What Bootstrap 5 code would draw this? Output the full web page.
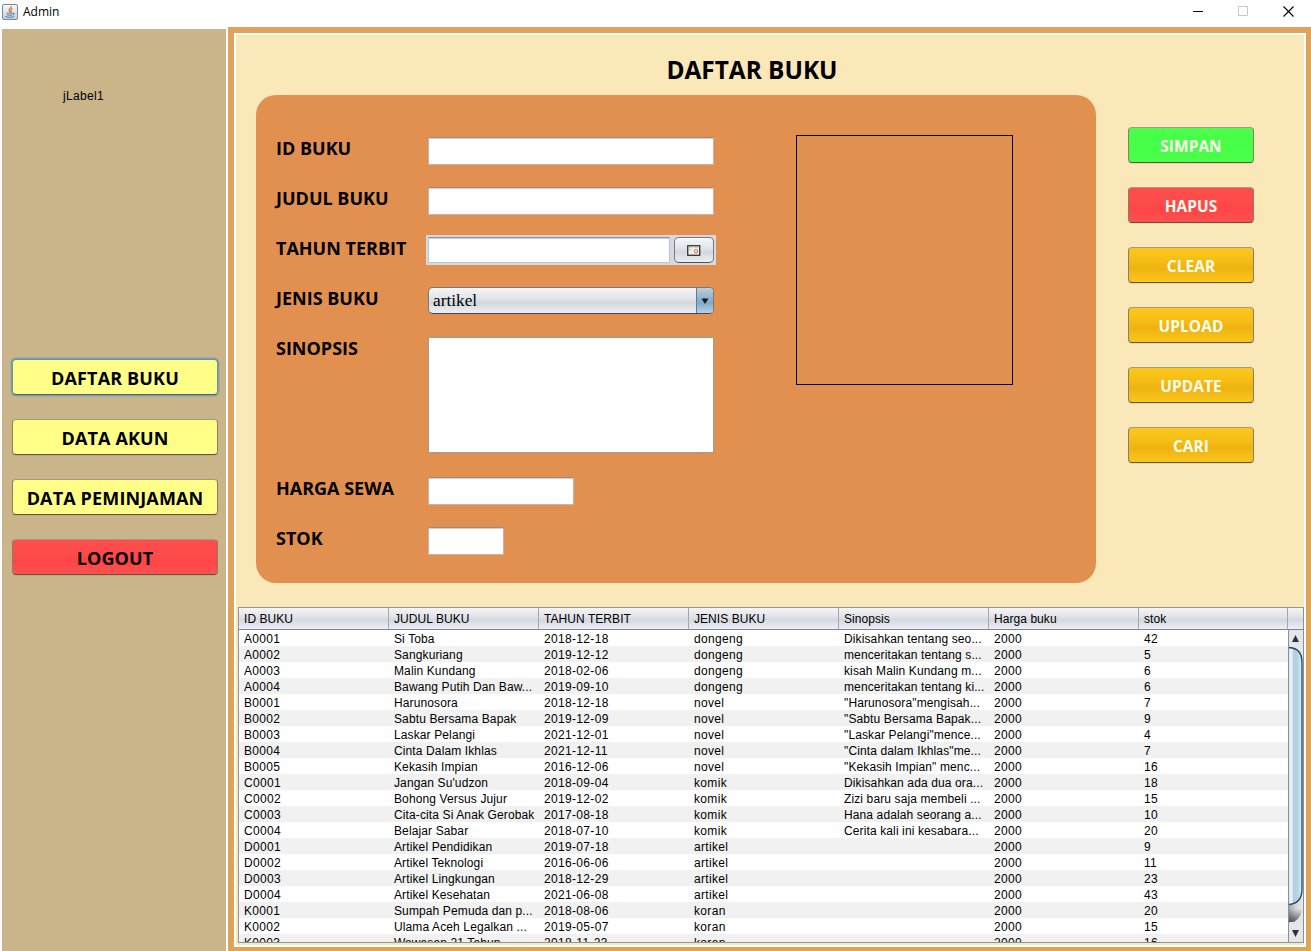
<!DOCTYPE html>
<html lang="id">
<head>
<meta charset="utf-8">
<meta name="viewport" content="width=device-width, initial-scale=1">
<title>Admin</title>
<link href="https://cdn.jsdelivr.net/npm/bootstrap@5.3.0/dist/css/bootstrap.min.css" rel="stylesheet">
<style>
  body { height: 951px; background: #fff; color: #000; font: 12px/16px "Liberation Sans", sans-serif; }
  .titlebar { height: 27px; padding: 0 17px 4px 2px; }
  .app-name { font: 12px/16px "Open Sans", sans-serif; margin: 1px 0 0 5px; }
  .win-icons { gap: 34px; }

  .side-panel { width: 224px; margin: 2px 2px 0 2px; padding: 59px 8px 0 10px; background: #cab48a; }
  .user-label { margin-left: 51px; height: 271px; letter-spacing: .32px; }
  .nim { font: 700 18px/20px "Open Sans", sans-serif; border-radius: 4px; padding: 0; color: #000; white-space: nowrap;
         border: 1px solid #857f63; border-top-color: #a39b80; border-bottom-color: #5b5740; height: 36px; box-shadow: 0 1px 0 rgba(90,90,90,.12); }
  .side-panel .nim { padding-top: 1px; letter-spacing: .14px; }
  .nim-yellow { background: #ffff88; }
  .nim-focus { border-color: #6f8f9a; border-bottom-color: #48626f; box-shadow: 0 0 0 1.4px #7f9fb2; }
  .nim-red { background: linear-gradient(#ff4e4c, #ff4b4b 40%, #ff4545 60%, #ff5050); }
  .nim-green { background: linear-gradient(#4bff4b, #45ff45 60%, #4cff4c); }
  .nim-gold { background: linear-gradient(#fcc81e, #f4bd15 40%, #efb210 58%, #fac61c); }
  .actions { width: 126px; gap: 24px; margin: 32px 0 0 32px; }
  .actions .nim { font-size: 15.4px; color: #fffdf0; padding-top: 3px; letter-spacing: .1px; }

  .frame-outer { background: #dfa45c; padding: 6px 5px 4px 6px; }
  .frame-inner { border: 2px solid #fff; background: #fae8b8; padding: 0 0 2px 2px; }
  .page-title { font: 700 24.4px/28px "Open Sans", sans-serif; margin: 21px 0 0 26px; width: 976px; height: 39px; }

  .form-panel { width: 840px; height: 488px; margin-left: 18px; border-radius: 20px; background: #e1904f; padding: 28px 83px 0 20px; }
  .form-grid { display: grid; grid-template-columns: 150px 290px; grid-template-rows: repeat(4, 50px) 140px 50px 50px; }
  .form-grid label { font: 700 18px/20px "Open Sans", sans-serif; padding-top: 15px; white-space: nowrap; }
  .field { background: #fff; border: 1px solid #c3b5a8; border-top: 1px solid #a08b7a; box-shadow: inset 0 1px 1px #c9ccd4; border-radius: 0;
           height: 28px; margin: 14px 0 0 2px; padding: 0; width: 286px; display: block; outline: 0; }
  .field-price { width: 146px; }
  .field-stock { width: 76px; }
  .date-box { background: #d6d9df; width: 290px; height: 30px; margin-top: 12px; padding: 2px; }
  .date-box .field { margin: 0; width: 242px; height: 26px; border-color: #c0c4cc; border-top-color: #8d919b; }
  .cal-btn { width: 40px; height: 26px; margin-left: 4px; border: 1px solid #737a87; border-bottom-color: #4b5260; border-radius: 5px;
             background: linear-gradient(#f7f8fa, #dfe2e7 45%, #d4d7dd 60%, #eceff4); padding: 0; }
  .kind { width: 286px; height: 27px; margin: 14px 0 0 2px; border: 1px solid #737a87; border-bottom-color: #3f4856; border-radius: 5px; overflow: hidden;
          background: linear-gradient(#f5f6f8, #dfe2e7 45%, #d4d7dd 60%, #eceff4); font: 17.3px/25px "Liberation Serif", serif; padding-left: 4px; }
  .kind-arrow { width: 17px; border-left: 1px solid #5d7c95; background: linear-gradient(#b9cede, #8fb0c8 45%, #86a9c3 60%, #b6d3e8); }
  textarea.field { border: 1px solid #a59a90; box-shadow: none; height: 116px; resize: none; }
  .cover { width: 217px; height: 250px; margin-top: 12px; border: 1px solid #000; }

  .grid-box { width: 1066px; margin-top: 24px; height: 336px; border: 1px solid #92959c; border-right-color: #8a8f99; overflow: hidden; background: #fff; }
  .book-table { table-layout: fixed; width: 1049px; margin: 0; letter-spacing: .12px; border-collapse: separate; border-spacing: 0; }
  .book-table col { width: 150px; }
  .book-table col:last-child { width: 149px; }
  .book-table th, .book-table td { padding: 0 5px; height: 16px; line-height: 16px; white-space: nowrap; overflow: hidden; font-weight: 400; text-align: left; }
  .book-table td { padding: 2px 5px 0; line-height: 14px; }
  .book-table td:nth-child(2), .book-table td:nth-child(5) { padding-right: 0; }
  .book-table th { height: 22px; line-height: 20px; border-right: 1px solid #a1a6b0; border-bottom: 1px solid #7e838e; letter-spacing: .06px; }
  .book-table th, .corner { background: linear-gradient(#f4f5f7, #dfe1e7 45%, #d5d8de 55%, #e6e9f2 90%, #eef0f8); }
  .book-table tbody tr:nth-child(even) { background: #f1f1f1; }
  .book-table td:nth-child(1), .book-table td:nth-child(3), .book-table td:nth-child(4), .book-table td:nth-child(6), .book-table td:nth-child(7) { letter-spacing: .33px; }
  .corner { height: 22px; border-bottom: 1px solid #7e838e; }
</style>
</head>
<body class="d-flex flex-column overflow-hidden">

<header class="titlebar d-flex align-items-center flex-shrink-0">
  <svg width="16" height="16" viewBox="0 0 16 16" fill="none">
    <defs><linearGradient id="jv" x2="0" y2="1"><stop stop-color="#fafbfc"/><stop offset="1" stop-color="#c3d0dd"/></linearGradient></defs>
    <rect x=".5" y=".5" width="15" height="15" rx="1.5" fill="url(#jv)" stroke="#7288a0"/>
    <path d="M9.300 2c.6 1.700-3 2.500-2.300 4.100.3.7 1.100 1.200 1 2.100M10.500 4.400c-1.800.7-2.200 1.500-1.500 2.400.4.600.3 1.200-.4 1.700" stroke="#e2702c" stroke-width="1.200"/>
    <path d="M4.500 9.200h6.200M5 10.900c1.500.5 3.700.5 5.300 0M10.900 9.200c2-.5 2.200 1.200.2 1.800M3.200 12.300c1.300 1.300 7.500 1.300 9 .2" stroke="#4a6f94" stroke-width=".9"/>
  </svg>
  <span class="app-name">Admin</span>
  <div class="win-icons d-flex align-items-center ms-auto">
    <svg width="11" height="11" viewBox="0 0 11 11"><path d="M0 5.500h10" stroke="#000"/></svg>
    <svg width="11" height="11" viewBox="0 0 11 11"><path d="M.5.500h9v9h-9z" fill="none" stroke="#c8c8c8"/></svg>
    <svg width="11" height="11" viewBox="0 0 11 11"><path d="M.5.500l10 10M10.500.500l-10 10" stroke="#000" stroke-width="1.100"/></svg>
  </div>
</header>

<div class="d-flex flex-grow-1">
  <nav class="side-panel flex-shrink-0">
    <div class="user-label">jLabel1</div>
    <div class="d-grid gap-4">
      <button class="btn nim nim-yellow nim-focus">DAFTAR BUKU</button>
      <button class="btn nim nim-yellow">DATA AKUN</button>
      <button class="btn nim nim-yellow">DATA PEMINJAMAN</button>
      <button class="btn nim nim-red">LOGOUT</button>
    </div>
  </nav>

  <div class="frame-outer d-flex flex-grow-1">
    <main class="frame-inner flex-grow-1">
      <h1 class="page-title text-center">DAFTAR BUKU</h1>
      <div class="d-flex">
        <form class="form-panel d-flex justify-content-between">
          <div class="form-grid">
            <label for="id">ID BUKU</label><input id="id" class="field">
            <label for="judul">JUDUL BUKU</label><input id="judul" class="field">
            <label for="tahun">TAHUN TERBIT</label>
            <div class="date-box d-flex"><input id="tahun" class="field">
              <button type="button" class="cal-btn d-flex align-items-center justify-content-center" aria-label="Kalender">
                <svg width="14" height="11" viewBox="0 0 14 11"><rect x=".75" y=".75" width="12" height="9.500" fill="#f3f0e6" stroke="#222" stroke-width="1.200"/><path d="M2 2.500h3M2 4.500h3M7 2.500h4" stroke="#c9d3bb"/><circle cx="9" cy="6.300" r="1.700" fill="#fff" stroke="#d44b52" stroke-width=".9"/></svg>
              </button>
            </div>
            <label>JENIS BUKU</label>
            <div class="kind d-flex justify-content-between"><span>artikel</span>
              <span class="kind-arrow d-flex align-items-center justify-content-center"><svg width="8" height="6" viewBox="0 0 8 6"><path d="M.5.500h7L4 6z" fill="#0d1b26"/></svg></span>
            </div>
            <label for="sinopsis">SINOPSIS</label><textarea id="sinopsis" class="field"></textarea>
            <label for="harga">HARGA SEWA</label><input id="harga" class="field field-price">
            <label for="stok">STOK</label><input id="stok" class="field field-stock">
          </div>
          <div class="cover"></div>
        </form>
        <div class="actions d-flex flex-column">
          <button class="btn nim nim-green">SIMPAN</button>
          <button class="btn nim nim-red">HAPUS</button>
          <button class="btn nim nim-gold">CLEAR</button>
          <button class="btn nim nim-gold">UPLOAD</button>
          <button class="btn nim nim-gold">UPDATE</button>
          <button class="btn nim nim-gold">CARI</button>
        </div>
      </div>

      <section class="grid-box d-flex">
        <div class="flex-shrink-0">
        <table class="book-table">
          <colgroup><col><col><col><col><col><col><col></colgroup>
          <thead><tr><th>ID BUKU</th><th>JUDUL BUKU</th><th>TAHUN TERBIT</th><th>JENIS BUKU</th><th>Sinopsis</th><th>Harga buku</th><th>stok</th></tr></thead>
          <tbody>
            <tr><td>A0001</td><td>Si Toba</td><td>2018-12-18</td><td>dongeng</td><td>Dikisahkan tentang seo...</td><td>2000</td><td>42</td></tr>
            <tr><td>A0002</td><td>Sangkuriang</td><td>2019-12-12</td><td>dongeng</td><td>menceritakan tentang s...</td><td>2000</td><td>5</td></tr>
            <tr><td>A0003</td><td>Malin Kundang</td><td>2018-02-06</td><td>dongeng</td><td>kisah Malin Kundang m...</td><td>2000</td><td>6</td></tr>
            <tr><td>A0004</td><td>Bawang Putih Dan Baw...</td><td>2019-09-10</td><td>dongeng</td><td>menceritakan tentang ki...</td><td>2000</td><td>6</td></tr>
            <tr><td>B0001</td><td>Harunosora</td><td>2018-12-18</td><td>novel</td><td>"Harunosora"mengisah...</td><td>2000</td><td>7</td></tr>
            <tr><td>B0002</td><td>Sabtu Bersama Bapak</td><td>2019-12-09</td><td>novel</td><td>"Sabtu Bersama Bapak...</td><td>2000</td><td>9</td></tr>
            <tr><td>B0003</td><td>Laskar Pelangi</td><td>2021-12-01</td><td>novel</td><td>"Laskar Pelangi"mence...</td><td>2000</td><td>4</td></tr>
            <tr><td>B0004</td><td>Cinta Dalam Ikhlas</td><td>2021-12-11</td><td>novel</td><td>"Cinta dalam Ikhlas"me...</td><td>2000</td><td>7</td></tr>
            <tr><td>B0005</td><td>Kekasih Impian</td><td>2016-12-06</td><td>novel</td><td>"Kekasih Impian" menc...</td><td>2000</td><td>16</td></tr>
            <tr><td>C0001</td><td>Jangan Su'udzon</td><td>2018-09-04</td><td>komik</td><td>Dikisahkan ada dua ora...</td><td>2000</td><td>18</td></tr>
            <tr><td>C0002</td><td>Bohong Versus Jujur</td><td>2019-12-02</td><td>komik</td><td>Zizi baru saja membeli ...</td><td>2000</td><td>15</td></tr>
            <tr><td>C0003</td><td>Cita-cita Si Anak Gerobak</td><td>2017-08-18</td><td>komik</td><td>Hana adalah seorang a...</td><td>2000</td><td>10</td></tr>
            <tr><td>C0004</td><td>Belajar Sabar</td><td>2018-07-10</td><td>komik</td><td>Cerita kali ini kesabara...</td><td>2000</td><td>20</td></tr>
            <tr><td>D0001</td><td>Artikel Pendidikan</td><td>2019-07-18</td><td>artikel</td><td></td><td>2000</td><td>9</td></tr>
            <tr><td>D0002</td><td>Artikel Teknologi</td><td>2016-06-06</td><td>artikel</td><td></td><td>2000</td><td>11</td></tr>
            <tr><td>D0003</td><td>Artikel Lingkungan</td><td>2018-12-29</td><td>artikel</td><td></td><td>2000</td><td>23</td></tr>
            <tr><td>D0004</td><td>Artikel Kesehatan</td><td>2021-06-08</td><td>artikel</td><td></td><td>2000</td><td>43</td></tr>
            <tr><td>K0001</td><td>Sumpah Pemuda dan p...</td><td>2018-08-06</td><td>koran</td><td></td><td>2000</td><td>20</td></tr>
            <tr><td>K0002</td><td>Ulama Aceh Legalkan ...</td><td>2019-05-07</td><td>koran</td><td></td><td>2000</td><td>15</td></tr>
            <tr><td>K0003</td><td>Wawasan 21 Tahun</td><td>2018-11-23</td><td>koran</td><td></td><td>2000</td><td>16</td></tr>
          </tbody>
        </table>
        </div>
        <div class="flex-grow-1 d-flex flex-column">
          <div class="corner"></div>
          <svg width="15" height="312" viewBox="0 0 15 312">
            <defs>
              <linearGradient id="thumb"><stop stop-color="#9fb4c6"/><stop offset=".12" stop-color="#e4f0f9"/><stop offset=".3" stop-color="#e6f1f9"/><stop offset=".36" stop-color="#b5cde0"/><stop offset=".7" stop-color="#b4d2ea"/><stop offset="1" stop-color="#dcf2ff"/></linearGradient>
              <linearGradient id="track"><stop stop-color="#999ca3"/><stop offset=".5" stop-color="#d3d5da"/><stop offset="1" stop-color="#e8eaee"/></linearGradient>
              <linearGradient id="edge" x2="0" y2="1"><stop offset=".35" stop-color="#333" stop-opacity="0"/><stop offset="1" stop-color="#333" stop-opacity=".75"/></linearGradient>
            </defs>
            <rect width="15" height="312" fill="#e4e6ea"/>
            <path d="M0 250h15v24q0 13-15 19z" fill="url(#track)"/>
            <path d="M0 272h15q0 15-9 20H0z" fill="url(#edge)"/>
            <path d="M0 17.500c9 0 14 5 14 15V259q0 15-14 15.500z" fill="url(#thumb)" stroke="#2f4350" stroke-width="1.300"/>
            <path d="M.5 0v312" stroke="#7e93a3"/>
            <path d="M4 12h7l-3.500-7zM4 300h7l-3.500 7z" fill="#2e3238"/>
          </svg>
        </div>
      </section>
    </main>
  </div>
</div>

<script src="https://cdn.jsdelivr.net/npm/bootstrap@5.3.0/dist/js/bootstrap.bundle.min.js"></script>
</body>
</html>
